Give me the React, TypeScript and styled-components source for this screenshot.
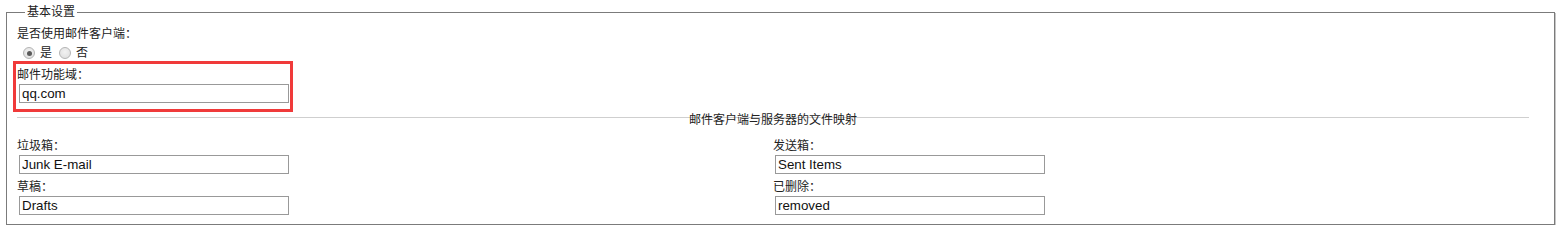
import styled, { createGlobalStyle } from "styled-components";

const GlobalStyle = createGlobalStyle`
  html, body {
    margin: 0;
    padding: 0;
    background: #ffffff;
  }
  body {
    font-family: "Liberation Sans", "Noto Sans CJK SC", sans-serif;
    font-size: 12px;
    color: #222222;
  }
`;

const Page = styled.div`
  padding: 5px 12px 0 6px;
  width: 1549px;
`;

const Fieldset = styled.fieldset`
  margin: 0;
  padding: 0 25px 9px 10px;
  border: 1px solid #7b7b7b;
  box-shadow: 1px 1px 0 #c6c6c6;
  min-width: 0;
`;

const Legend = styled.legend`
  padding: 0 2px;
  margin-left: 8px;
  font-size: 12px;
  line-height: 14px;
  color: #222222;
`;

const Label = styled.div<{ $top?: number }>`
  display: block;
  line-height: 14px;
  font-size: 12px;
  margin-top: ${(p) => p.$top ?? 0}px;
  white-space: nowrap;
`;

const RadioRow = styled.div`
  display: flex;
  align-items: center;
  height: 14px;
  margin-top: 5px;
  padding-left: 6px;
`;

const RadioOption = styled.label<{ $gap: number }>`
  display: inline-flex;
  align-items: center;
  margin-right: ${(p) => p.$gap}px;
  font-size: 12px;
  line-height: 14px;
`;

const Radio = styled.input.attrs({ type: "radio" })`
  appearance: none;
  width: 12px;
  height: 12px;
  margin: 0 5px 0 0;
  border: 1px solid #b4b4b4;
  border-radius: 50%;
  background: radial-gradient(circle at 50% 40%, #f2f2f2 0%, #dcdcdc 100%);
  box-sizing: border-box;
  display: grid;
  place-items: center;

  &:checked::after {
    content: "";
    width: 5px;
    height: 5px;
    border-radius: 50%;
    background: #5a5a5a;
  }
`;

const Highlight = styled.div`
  display: inline-block;
  margin: 1px 0 0 -4px;
  padding: 0 1px 6px 1px;
  border: 3px solid #f03a3a;
`;

const TextInput = styled.input.attrs({ type: "text" })`
  display: block;
  width: 270px;
  height: 19px;
  margin: 2px 0 0 2px;
  padding: 0 2px;
  box-sizing: border-box;
  border: 1px solid #999999;
  font-family: "Liberation Sans", sans-serif;
  font-size: 13.33px;
  color: #111111;
  background: #ffffff;
  outline: none;
`;

const Divider = styled.div`
  margin-top: 1px;
  height: 14px;
  line-height: 14px;
  text-align: center;
  font-size: 12px;
  background: linear-gradient(#cfcfcf, #cfcfcf) no-repeat 0 4px / 100% 1px;
`;

const Grid = styled.div`
  display: grid;
  grid-template-columns: 1fr 1fr;
  margin-top: 12px;
`;

const Column = styled.div`
  display: flex;
  flex-direction: column;
`;

const Field = styled.div<{ $top?: number }>`
  margin-top: ${(p) => p.$top ?? 0}px;
`;

type Mapping = { label: string; value: string };

const left: Mapping[] = [
  { label: "垃圾箱：", value: "Junk E-mail" },
  { label: "草稿：", value: "Drafts" },
];

const right: Mapping[] = [
  { label: "发送箱：", value: "Sent Items" },
  { label: "已删除：", value: "removed" },
];

function MappingColumn({ items }: { items: Mapping[] }) {
  return (
    <Column>
      {items.map((item, i) => (
        <Field key={item.label} $top={i === 0 ? 0 : 6}>
          <Label>{item.label}</Label>
          <TextInput defaultValue={item.value} />
        </Field>
      ))}
    </Column>
  );
}

export default function App() {
  return (
    <>
      <GlobalStyle />
      <Page>
        <Fieldset>
          <Legend>基本设置</Legend>
          <Label $top={8}>是否使用邮件客户端：</Label>
          <RadioRow>
            <RadioOption $gap={7}>
              <Radio name="useClient" defaultChecked />是
            </RadioOption>
            <RadioOption $gap={0}>
              <Radio name="useClient" />否
            </RadioOption>
          </RadioRow>
          <Highlight>
            <Label $top={4}>邮件功能域：</Label>
            <TextInput defaultValue="qq.com" />
          </Highlight>
          <Divider>邮件客户端与服务器的文件映射</Divider>
          <Grid>
            <MappingColumn items={left} />
            <MappingColumn items={right} />
          </Grid>
        </Fieldset>
      </Page>
    </>
  );
}
